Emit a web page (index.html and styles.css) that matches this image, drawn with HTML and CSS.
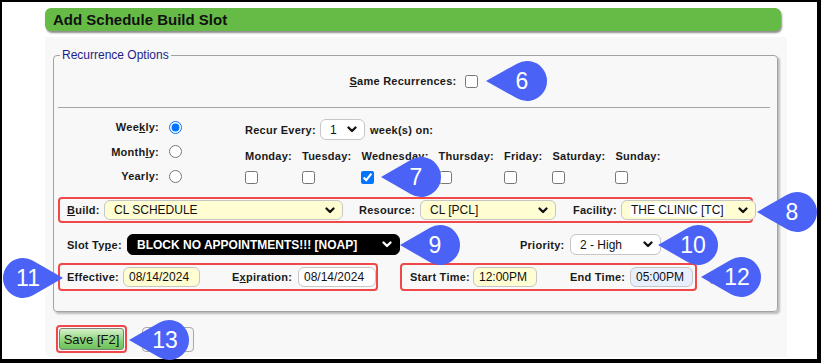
FILE: index.html
```html
<!DOCTYPE html>
<html>
<head>
<meta charset="utf-8">
<title>Add Schedule Build Slot</title>
<link rel="stylesheet" href="styles.css">
</head>
<body>
<div class="screen">
  <div class="page">
    <div class="header"><h1 class="title">Add Schedule Build Slot</h1></div>
    <div class="panel">
      <fieldset class="recur">
        <legend class="legend">Recurrence Options</legend>
        <div class="same-row">
          <span class="lbl"><u>S</u>ame Recurrences:</span>
          <input class="cb" type="checkbox">
        </div>
        <div class="divider"></div>
        <div class="freq">
          <div class="freq-col">
            <div class="freq-item"><span class="lbl">Wee<u>k</u>ly:</span><input class="rd" type="radio" name="f" checked></div>
            <div class="freq-item"><span class="lbl">Month<u>l</u>y:</span><input class="rd" type="radio" name="f"></div>
            <div class="freq-item"><span class="lbl">Yearly:</span><input class="rd" type="radio" name="f"></div>
          </div>
          <div class="weekly">
            <div class="every">
              <span class="lbl every-lbl">Recur Every:</span>
              <div class="sel sel-every"><span class="sel-text">1</span><svg class="chev" width="10" height="7" viewBox="0 0 10 7"><polyline points="1.5,1.5 5,5 8.5,1.5"/></svg></div>
              <span class="lbl weeks-lbl">week(s) on:</span>
            </div>
            <div class="days">
              <div class="day"><span class="lbl">Monday:</span><input class="cb" type="checkbox"></div>
              <div class="day"><span class="lbl">Tuesday:</span><input class="cb" type="checkbox"></div>
              <div class="day"><span class="lbl">Wednesday:</span><input class="cb" type="checkbox" checked></div>
              <div class="day"><span class="lbl">Thursday:</span><input class="cb" type="checkbox"></div>
              <div class="day"><span class="lbl">Friday:</span><input class="cb" type="checkbox"></div>
              <div class="day"><span class="lbl">Saturday:</span><input class="cb" type="checkbox"></div>
              <div class="day"><span class="lbl">Sunday:</span><input class="cb" type="checkbox"></div>
            </div>
          </div>
        </div>

        <div class="hl row-build">
          <span class="lbl w-build"><u>B</u>uild:</span>
          <div class="sel sel-yellow w-build-sel"><span class="sel-text">CL SCHEDULE</span><svg class="chev" width="10" height="7" viewBox="0 0 10 7"><polyline points="1.5,1.5 5,5 8.5,1.5"/></svg></div>
          <span class="lbl w-res">Resource:</span>
          <div class="sel sel-yellow w-res-sel"><span class="sel-text">CL [PCL]</span><svg class="chev" width="10" height="7" viewBox="0 0 10 7"><polyline points="1.5,1.5 5,5 8.5,1.5"/></svg></div>
          <span class="lbl w-fac">Facility:</span>
          <div class="sel sel-yellow w-fac-sel"><span class="sel-text sel-hi">THE CLINIC [TC]</span><svg class="chev" width="10" height="7" viewBox="0 0 10 7"><polyline points="1.5,1.5 5,5 8.5,1.5"/></svg></div>
        </div>

        <div class="row-slot">
          <span class="lbl w-slot">Slot Ty<u>p</u>e:</span>
          <div class="sel sel-dark w-slot-sel"><span class="sel-text">BLOCK NO APPOINTMENTS!!! [NOAP]</span><svg class="chev" width="10" height="7" viewBox="0 0 10 7"><polyline points="1.5,1.5 5,5 8.5,1.5"/></svg></div>
          <span class="lbl w-pri">Priority:</span>
          <div class="sel w-pri-sel"><span class="sel-text">2 - High</span><svg class="chev" width="10" height="7" viewBox="0 0 10 7"><polyline points="1.5,1.5 5,5 8.5,1.5"/></svg></div>
        </div>

        <div class="row-dates">
          <div class="hl box-dates">
            <span class="lbl w-eff">Effective:</span>
            <input class="txt txt-yellow w-eff-in" type="text" value="08/14/2024" readonly>
            <span class="lbl w-exp">E<u>x</u>piration:</span>
            <input class="txt w-exp-in" type="text" value="08/14/2024" readonly>
          </div>
          <div class="hl box-times">
            <span class="lbl w-start">Start Time:</span>
            <input class="txt txt-yellow w-start-in" type="text" value="12:00PM" readonly>
            <span class="lbl w-end">End Time:</span>
            <input class="txt txt-blue w-end-in" type="text" value="05:00PM" readonly>
          </div>
          <input class="cb cb-extra" type="checkbox">
        </div>
      </fieldset>

      <div class="actions">
        <div class="hl box-save"><button class="btn-save" type="button">Save [F2]</button></div>
        <button class="btn-other" type="button">&nbsp;</button>
      </div>
    </div>
  </div>
</div>

<svg class="callouts" width="821" height="363" viewBox="0 0 821 363">
  <g class="bubble">
    <path d="M486,81 L517,63.68 A20,20 0 1 1 517,98.32 Z"/>
    <text x="522" y="81">6</text>
  </g>
  <g class="bubble">
    <path d="M381,177 L411,159.68 A20,20 0 1 1 411,194.32 Z"/>
    <text x="416" y="177">7</text>
  </g>
  <g class="bubble">
    <path d="M757,212 L787,194.68 A20,20 0 1 1 787,229.32 Z"/>
    <text x="792" y="212">8</text>
  </g>
  <g class="bubble">
    <path d="M400,245 L430,227.68 A20,20 0 1 1 430,262.32 Z"/>
    <text x="435" y="245">9</text>
  </g>
  <g class="bubble">
    <path d="M658,245 L688,227.68 A20,20 0 1 1 688,262.32 Z"/>
    <text x="693" y="245">10</text>
  </g>
  <g class="bubble">
    <path d="M63,278 L33,295.32 A20,20 0 1 1 33,260.68 Z"/>
    <text x="28" y="278">11</text>
  </g>
  <g class="bubble">
    <path d="M701,277 L731,259.68 A20,20 0 1 1 731,294.32 Z"/>
    <text x="737" y="277">12</text>
  </g>
  <g class="bubble">
    <path d="M129,340 L159,322.68 A20,20 0 1 1 159,357.32 Z"/>
    <text x="165" y="340">13</text>
  </g>
</svg>
</body>
</html>
```

FILE: styles.css
```css
* { box-sizing: border-box; }
html, body { margin: 0; padding: 0; }
body {
  position: relative;
  width: 821px;
  height: 363px;
  overflow: hidden;
  background: #000;
  font-family: "Liberation Sans", Arial, sans-serif;
  color: #1a1a1a;
}
.screen {
  width: 821px;
  height: 363px;
  border-style: solid;
  border-color: #000;
  border-width: 2px 4px 4px 2px;
  background: #fff;
}
.page { padding: 6px 0 0 43px; }
.header {
  width: 736px;
  height: 23px;
  background: #66bb46;
  border-radius: 6px;
  box-shadow: 1px 2px 2px rgba(0,0,0,0.45);
  display: flex;
  align-items: center;
  padding-left: 8px;
}
.title { margin: 0; font-size: 15px; font-weight: bold; color: #111; line-height: 23px; }
.panel {
  margin-top: 6px;
  width: 742px;
  height: 320px;
  background: #f8f8f8;
  border-bottom-left-radius: 6px;
  padding: 11px 0 0 8px;
}
.recur {
  margin: 0;
  width: 725px;
  border: 1px solid #a2a2a2;
  border-radius: 4px;
  box-shadow: 2px 2px 2px #bdbdbd;
  padding: 0 7px 20px 4px;
  min-width: 0;
}
.legend {
  font-size: 12px;
  line-height: 14px;
  color: #1d1d8a;
  padding: 0 2px;
  margin-left: 2px;
}
.lbl {
  font-size: 11px;
  font-weight: bold;
  letter-spacing: 0.25px;
  white-space: nowrap;
  line-height: 14px;
  flex: none;
}
.cb {
  margin: 0;
  width: 13px;
  height: 13px;
  flex: none;
}
.rd {
  margin: 0;
  width: 13px;
  height: 13px;
  flex: none;
}
.same-row {
  height: 38px;
  display: flex;
  align-items: center;
  justify-content: center;
  gap: 9px;
}
.divider { margin-top: 7px; height: 1px; background: #a4a4a4; }
.freq { height: 89px; display: flex; padding-top: 7px; }
.freq-col { width: 124px; flex: none; }
.freq-item {
  height: 24.5px;
  display: flex;
  align-items: center;
  justify-content: flex-end;
  gap: 10px;
}
.weekly { margin-left: 63px; }
.every { margin-top: 4px; height: 21px; display: flex; align-items: center; }
.every-lbl { width: 75px; }
.weeks-lbl { margin-left: 5px; }
.days { margin-top: 9px; display: flex; gap: 10px; }
.day { display: flex; flex-direction: column; align-items: flex-start; gap: 8px; }

.sel {
  height: 20px;
  border: 1px solid #c6c6c6;
  border-radius: 6px;
  background: #fff;
  display: flex;
  align-items: center;
  justify-content: space-between;
  padding: 0 7px 0 9px;
  font-size: 12px;
  color: #111;
  flex: none;
}
.sel-text { white-space: nowrap; }
.chev { display: block; flex: none; }
.chev polyline { fill: none; stroke: #111; stroke-width: 2.3; stroke-linecap: round; stroke-linejoin: round; }
.sel-every { width: 45px; height: 21px; }
.sel-yellow { background: #fffdd2; }
.sel-hi { background: #fff; padding: 0 1px; margin-left: -1px; }
.sel-dark { background: #000; color: #fff; font-weight: bold; font-size: 12px; height: 21px; border-color: #000; }
.sel-dark .chev polyline { stroke: #fff; }

.hl { border: 2px solid #f04848; border-radius: 4px; flex: none; }
.row-build {
  width: 695px;
  height: 26px;
  display: flex;
  align-items: center;
  padding-left: 7px;
}
.w-build { width: 37px; }
.w-build-sel { width: 239px; }
.w-res { width: 61px; margin-left: 16px; }
.w-res-sel { width: 136px; }
.w-fac { width: 48px; margin-left: 17px; }
.w-fac-sel { width: 135px; }

.row-slot {
  margin-top: 11px;
  height: 21px;
  display: flex;
  align-items: center;
  padding-left: 9px;
}
.w-slot { width: 60px; }
.w-slot-sel { width: 273px; }
.w-pri { width: 50px; margin-left: 120px; }
.w-pri-sel { width: 91px; height: 21px; }

.row-dates { margin-top: 8px; display: flex; align-items: center; }
.box-dates, .box-times {
  height: 28px;
  display: flex;
  align-items: center;
}
.box-dates { width: 320px; padding-left: 7px; }
.box-times { width: 297px; padding-left: 8px; margin-left: 22px; }
.txt {
  margin: 0;
  height: 20px;
  border: 1px solid #c6c6c6;
  border-radius: 6px;
  background: #fff;
  padding: 0 0 0 5px;
  font-family: "Liberation Sans", Arial, sans-serif;
  font-size: 12px;
  color: #111;
  outline: none;
  flex: none;
}
.txt-yellow { background: #fffdd2; }
.txt-blue { background: #e8f0fe; }
.w-eff { width: 56px; }
.w-eff-in { width: 77px; }
.w-exp { width: 66px; margin-left: 32px; }
.w-exp-in { width: 78px; }
.w-start { width: 63px; }
.w-start-in { width: 64px; }
.w-end { width: 60px; margin-left: 33px; }
.w-end-in { width: 63px; }
.cb-extra { margin-left: 13px; }

.actions { margin: 13px 0 0 3px; display: flex; align-items: center; }
.box-save { width: 71px; height: 28px; padding: 1px; }
.btn-save {
  display: block;
  width: 100%;
  height: 100%;
  margin: 0;
  padding: 0;
  border: 1px solid #7f7f7f;
  border-radius: 3px;
  background: linear-gradient(#d6f1cb, #8ed47c 55%, #6cc158);
  font-family: "Liberation Sans", Arial, sans-serif;
  font-size: 13px;
  color: #111;
}
.btn-other {
  margin: 0 0 0 15px;
  width: 52px;
  height: 25px;
  border: 1px solid #a8a8a8;
  border-radius: 4px;
  background: #f4f4f4;
}

.callouts { position: absolute; left: 0; top: 0; pointer-events: none; }
.bubble path { fill: #4a62f6; }
.bubble text {
  fill: #fff;
  font-family: "Liberation Sans", Arial, sans-serif;
  font-size: 23px;
  text-anchor: middle;
  dominant-baseline: central;
}
```
